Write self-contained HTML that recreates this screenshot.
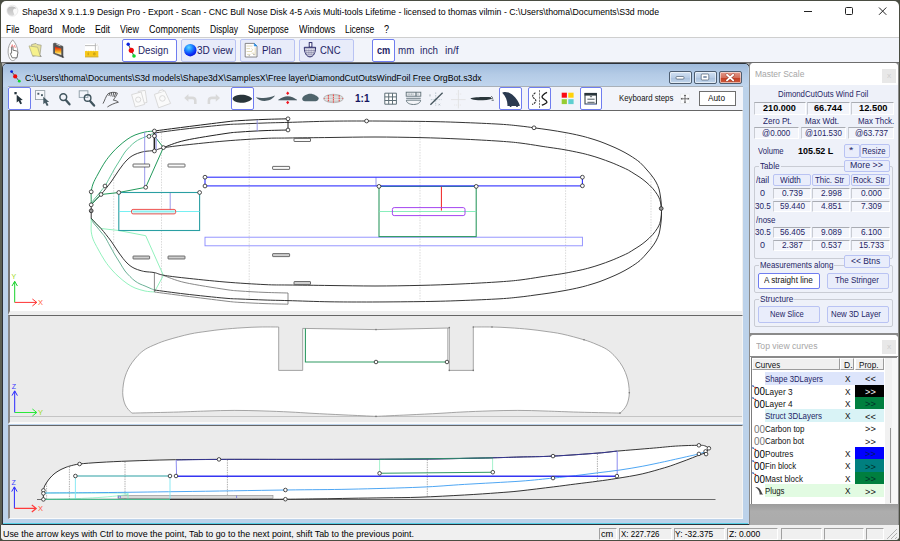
<!DOCTYPE html>
<html>
<head>
<meta charset="utf-8">
<title>Shape3d X</title>
<style>
html,body{margin:0;padding:0;}
body{width:900px;height:541px;overflow:hidden;background:#4a4d42;position:relative;font-family:"Liberation Sans",sans-serif;font-size:10px;color:#000;}
.a{position:absolute;box-sizing:border-box;}
.t{position:absolute;white-space:nowrap;line-height:1;transform-origin:0 0;display:block;}
svg{position:absolute;overflow:visible;}
#win{left:1px;top:1px;width:898px;height:539px;background:#fff;border-radius:5px 5px 4px 4px;}
#toolbar{left:1px;top:37px;width:898px;height:25px;background:#f2f4fa;border-top:1px solid #cfcfcf;}
#mdibg{left:1px;top:62px;width:898px;height:463px;background:#ababab;border-top:1px solid #6e6e6e;}
#statusbar{left:1px;top:525px;width:898px;height:15px;background:#f0f0f0;border-radius:0 0 4px 4px;}
.tb{position:absolute;box-sizing:border-box;top:39px;height:23px;border:1px solid #b9c3f3;background:#e8ecfa;border-radius:2px;}
.tb.sel{background:#fff;border:1.5px solid #6f7df0;}
/* MDI child */
#child{left:2px;top:63px;width:747.6px;height:462px;border:1px solid #2c3138;border-radius:5px 5px 0 0;background:#bcd2ea;}
#childtitle{left:3px;top:64px;width:745px;height:23px;border-radius:4px 4px 0 0;background:linear-gradient(#9fbbdc,#b4cbe6 45%,#c1d6ee);}
#childtool{left:8px;top:87px;width:735px;height:24px;background:#f2f4fa;}
.cb{position:absolute;box-sizing:border-box;top:87.4px;height:22.6px;border:1.5px solid #6f7df0;background:#fff;border-radius:2px;}
.view{position:absolute;left:8px;width:735px;box-sizing:border-box;background:#ebebeb;}
.capbtn{position:absolute;box-sizing:border-box;top:71px;height:13px;border:1px solid #4d5d70;border-radius:2px;background:linear-gradient(#d3e2f3,#b9cde6 50%,#a9c0dd 51%,#c2d6ec);box-shadow:inset 0 0 0 1px rgba(255,255,255,.55);}
/* dock panels */
#dock{left:749px;top:63px;width:150px;height:462px;background:#8a8a8a;}
.panel{position:absolute;box-sizing:border-box;left:749.8px;width:147.8px;background:#eef1f9;border-radius:4px 4px 0 0;}
.cap{position:absolute;left:0;top:0;width:147.8px;height:22px;box-sizing:border-box;background:#fff;border-radius:4px 4px 0 0;}
.capx{position:absolute;left:882px;width:14px;height:14px;background:#e8e8e8;}
.ed{position:absolute;box-sizing:border-box;border-top:1px solid #a9acb3;border-left:1px solid #c9ccd3;border-right:1px solid #fff;border-bottom:1px solid #fff;background:#f3f5fb;}
.bt{position:absolute;box-sizing:border-box;border:1px solid #b9c3f3;background:#e9edfb;border-radius:2px;}
.bt.sel{background:#fff;border:1.5px solid #6f7df0;}
.grp{position:absolute;box-sizing:border-box;border:1px solid #c9ccd4;border-radius:2px;}
.hd{position:absolute;box-sizing:border-box;top:358px;height:12px;background:#f0f0f0;border-right:1px solid #9c9c9c;border-bottom:1px solid #9c9c9c;border-top:1px solid #fff;border-left:1px solid #fff;}
.row{position:absolute;height:12.5px;}
.sb{position:absolute;box-sizing:border-box;top:528px;height:12px;border-top:1px solid #a0a0a0;border-left:1px solid #a0a0a0;border-right:1px solid #fff;border-bottom:1px solid #fff;}

</style>
</head>
<body>
<div class="a" id="win"></div>
<div class="a" id="toolbar"></div>
<div class="a" id="mdibg"></div>
<div class="a" id="statusbar"></div>
<div class="a" style="left:0;top:63px;width:2.4px;height:462px;background:#5c5f52;"></div>
<span class="t" style="left:21.6px;top:7.0px;font-size:9.5px;color:#000;transform:scaleX(0.921);">Shape3d X 9.1.1.9 Design Pro - Export - Scan - CNC Bull Nose Disk 4-5 Axis Multi-tools Lifetime - licensed to thomas vilmin - C:\Users\thoma\Documents\S3d mode</span>
<span class="t" style="left:5.6px;top:24.5px;font-size:10px;color:#000;transform:scaleX(0.840);">File</span>
<span class="t" style="left:29.1px;top:24.5px;font-size:10px;color:#000;transform:scaleX(0.873);">Board</span>
<span class="t" style="left:62.1px;top:24.5px;font-size:10px;color:#000;transform:scaleX(0.931);">Mode</span>
<span class="t" style="left:95.3px;top:24.5px;font-size:10px;color:#000;transform:scaleX(0.873);">Edit</span>
<span class="t" style="left:120.3px;top:24.5px;font-size:10px;color:#000;transform:scaleX(0.874);">View</span>
<span class="t" style="left:149.1px;top:24.5px;font-size:10px;color:#000;transform:scaleX(0.896);">Components</span>
<span class="t" style="left:210.3px;top:24.5px;font-size:10px;color:#000;transform:scaleX(0.855);">Display</span>
<span class="t" style="left:248.3px;top:24.5px;font-size:10px;color:#000;transform:scaleX(0.843);">Superpose</span>
<span class="t" style="left:299.1px;top:24.5px;font-size:10px;color:#000;transform:scaleX(0.895);">Windows</span>
<span class="t" style="left:345.4px;top:24.5px;font-size:10px;color:#000;transform:scaleX(0.850);">License</span>
<span class="t" style="left:384.1px;top:24.5px;font-size:10px;color:#000;transform:scaleX(0.908);">?</span>
<svg style="left:800px;top:4px" width="96" height="16" viewBox="800 4 96 16"><g stroke="#222" stroke-width="1" fill="none"><path d="M804 11.5H812"/><rect x="845.5" y="7.5" width="7" height="7" rx="1"/><path d="M879 7.5L886.3 14.8M886.3 7.5L879 14.8"/></g></svg>
<div class="tb sel" style="left:122px;width:55px;"></div>
<div class="tb" style="left:181px;width:54.5px;"></div>
<div class="tb" style="left:240px;width:55px;"></div>
<div class="tb" style="left:298.5px;width:55.5px;"></div>
<div class="tb sel" style="left:372px;width:23px;"></div>
<span class="t" style="left:138.3px;top:45.1px;font-size:10.5px;color:#1f1f66;transform:scaleX(0.930);">Design</span>
<span class="t" style="left:197.1px;top:45.1px;font-size:10.5px;color:#1f1f66;transform:scaleX(0.958);">3D view</span>
<span class="t" style="left:261.6px;top:45.1px;font-size:10.5px;color:#1f1f66;transform:scaleX(0.933);">Plan</span>
<span class="t" style="left:320.1px;top:45.1px;font-size:10.5px;color:#1f1f66;transform:scaleX(0.905);">CNC</span>
<span class="t" style="left:377.1px;top:44.8px;font-size:10.5px;color:#1f1f66;transform:scaleX(0.876);font-weight:bold;">cm</span>
<span class="t" style="left:398.3px;top:44.8px;font-size:10.5px;color:#1f1f66;transform:scaleX(0.931);">mm</span>
<span class="t" style="left:420.4px;top:44.8px;font-size:10.5px;color:#1f1f66;transform:scaleX(0.934);">inch</span>
<span class="t" style="left:445.4px;top:44.8px;font-size:10.5px;color:#1f1f66;transform:scaleX(0.977);">in/f</span>
<div class="a" id="child"></div>
<div class="a" id="childtitle"></div>
<div class="a" id="childtool"></div>
<div class="a" style="left:8px;top:86.3px;width:735px;height:1px;background:#a9b0b8;"></div>
<span class="t" style="left:24.6px;top:73.0px;font-size:9.5px;color:#000;transform:scaleX(0.917);">C:\Users\thoma\Documents\S3d models\Shape3dX\SamplesX\Free layer\DiamondCutOutsWindFoil Free OrgBot.s3dx</span>
<div class="capbtn" style="left:668.5px;width:23px;"></div>
<div class="capbtn" style="left:693.5px;width:23px;"></div>
<div class="capbtn" style="left:718.5px;width:23.5px;background:linear-gradient(#e29a8b,#d4705c 50%,#c23c22 51%,#cf5a3c);"></div>
<svg style="left:668px;top:70px" width="76" height="16" viewBox="668 70 76 16"><rect x="676" y="76.5" width="8" height="2.6" rx="1" fill="#fff" stroke="#4d5d70" stroke-width=".7"/><rect x="701.2" y="74" width="7.6" height="6" rx="1" fill="#fff" stroke="#4d5d70" stroke-width=".7"/><rect x="703.3" y="76" width="3.4" height="2" fill="#8a9bb3"/><path d="M727 74.8L733.2 80.4M733.2 74.8L727 80.4" stroke="#7a2a1c" stroke-width="3" stroke-linecap="round" opacity=".55"/><path d="M727 74.8L733.2 80.4M733.2 74.8L727 80.4" stroke="#fff" stroke-width="1.9" stroke-linecap="round"/></svg>
<div class="cb" style="left:8.3px;width:22.5px;"></div>
<div class="cb" style="left:231.3px;width:22.5px;"></div>
<div class="cb" style="left:499px;width:23px;"></div>
<div class="cb" style="left:528px;width:23px;"></div>
<div class="cb" style="left:579.7px;width:22px;"></div>
<span class="t" style="left:354.9px;top:93.1px;font-size:10.5px;color:#151560;transform:scaleX(0.955);font-weight:bold;">1:1</span>
<span class="t" style="left:619.3px;top:93.9px;font-size:8.7px;color:#111;transform:scaleX(0.901);">Keyboard steps</span>
<div class="a" style="left:699px;top:91.3px;width:37px;height:15.2px;border:1px solid #6e6e6e;background:#fff;"></div>
<span class="t" style="left:708.4px;top:93.9px;font-size:8.7px;color:#111;transform:scaleX(0.951);">Auto</span>
<div class="view" style="top:110px;height:205px;background:#fff;border-top:1.5px solid #666;border-left:2px solid #777;border-bottom:4px solid #efefef;border-right:1px solid #efefef;"></div>
<div class="view" style="top:315px;height:109px;border-top:1.3px solid #666;border-left:2px solid #8a8a8a;border-bottom:2px solid #fafafa;border-right:1px solid #f4f4f4;"></div>
<div class="a" style="left:10px;top:416px;width:732px;height:1px;background:#c4c4c4;"></div>
<div class="view" style="top:424.6px;height:94.6px;border-top:1.3px solid #666;border-left:2px solid #8a8a8a;border-bottom:1.5px solid #fafafa;border-right:1px solid #f4f4f4;"></div>
<div class="a" style="left:3px;top:523px;width:745px;height:1px;background:#56d0e6;"></div>
<div class="a" id="dock"></div>
<div class="panel" style="top:63.3px;height:269.3px;"><div class="cap"></div></div>
<div class="panel" style="top:334.6px;height:169.2px;background:#fff;"><div class="cap" style="border-bottom:1px solid #8a8a8a;height:22.6px;"></div></div>
<div class="a" style="left:750px;top:504px;width:148px;height:21px;background:linear-gradient(#9c9c9c,#adadad 35%,#ababab);"></div>
<div class="capx" style="top:68.5px;"></div><div class="capx" style="top:339.5px;"></div>
<span class="t" style="left:886.9px;top:71.9px;font-size:7.5px;color:#cfcfcf;transform:scaleX(1.120);">x</span>
<span class="t" style="left:886.9px;top:343.4px;font-size:7.5px;color:#cfcfcf;transform:scaleX(1.120);">x</span>
<span class="t" style="left:755.3px;top:69.5px;font-size:8.5px;color:#a6a6a6;transform:scaleX(0.996);">Master Scale</span>
<span class="t" style="left:755.9px;top:341.6px;font-size:8.5px;color:#a6a6a6;transform:scaleX(1.017);">Top view curves</span>
<span class="t" style="left:777.6px;top:90.1px;font-size:8.7px;color:#1f1f66;transform:scaleX(0.899);">DimondCutOuts Wind Foil</span>
<div class="ed" style="left:753.7px;top:102px;width:52.1px;height:12.5px;"></div>
<div class="ed" style="left:807px;top:102px;width:43px;height:12.5px;"></div>
<div class="ed" style="left:851px;top:102px;width:43px;height:12.5px;"></div>
<span class="t" style="left:763.3px;top:104.1px;font-size:8.7px;color:#000;transform:scaleX(1.048);font-weight:bold;">210.000</span>
<span class="t" style="left:814.3px;top:104.1px;font-size:8.7px;color:#000;transform:scaleX(1.057);font-weight:bold;">66.744</span>
<span class="t" style="left:858.6px;top:104.1px;font-size:8.7px;color:#000;transform:scaleX(1.072);font-weight:bold;">12.500</span>
<span class="t" style="left:763.3px;top:117.1px;font-size:8.7px;color:#1f1f66;transform:scaleX(0.932);">Zero Pt.</span>
<span class="t" style="left:805.4px;top:117.1px;font-size:8.7px;color:#1f1f66;transform:scaleX(0.927);">Max Wdt.</span>
<span class="t" style="left:857.9px;top:117.1px;font-size:8.7px;color:#1f1f66;transform:scaleX(0.907);">Max Thck.</span>
<div class="ed" style="left:753.7px;top:127.3px;width:45.3px;height:12.2px;"></div>
<div class="ed" style="left:800.8px;top:127.3px;width:45.5px;height:12.2px;"></div>
<div class="ed" style="left:848.3px;top:127.3px;width:45.7px;height:12.2px;"></div>
<span class="t" style="left:762.1px;top:129.1px;font-size:8.7px;color:#1f1f66;transform:scaleX(0.926);">@0.000</span>
<span class="t" style="left:804.9px;top:129.1px;font-size:8.7px;color:#1f1f66;transform:scaleX(0.915);">@101.530</span>
<span class="t" style="left:854.9px;top:129.1px;font-size:8.7px;color:#1f1f66;transform:scaleX(0.932);">@63.737</span>
<span class="t" style="left:757.9px;top:147.4px;font-size:8.7px;color:#1f1f66;transform:scaleX(0.880);">Volume</span>
<span class="t" style="left:797.6px;top:147.4px;font-size:8.7px;color:#000;transform:scaleX(1.029);font-weight:bold;">105.52 L</span>
<div class="bt" style="left:844px;top:144.3px;width:15.5px;height:14px;"></div>
<div class="bt" style="left:859.5px;top:144.3px;width:30.5px;height:14px;"></div>
<span class="t" style="left:849.1px;top:146.1px;font-size:8.7px;color:#1f1f66;transform:scaleX(1.268);">*</span>
<span class="t" style="left:861.6px;top:147.4px;font-size:8.7px;color:#1f1f66;transform:scaleX(0.885);">Resize</span>
<div class="grp" style="left:754.3px;top:166.3px;width:138.7px;height:92.7px;"></div>
<div class="a" style="left:758.5px;top:164px;width:22px;height:5px;background:#eef1f9;"></div>
<span class="t" style="left:759.6px;top:162.4px;font-size:8.7px;color:#1f1f66;transform:scaleX(0.938);">Table</span>
<div class="bt" style="left:844px;top:159.8px;width:46px;height:12.4px;"></div>
<span class="t" style="left:849.6px;top:161.1px;font-size:8.7px;color:#1f1f66;transform:scaleX(1.014);">More &gt;&gt;</span>
<div class="bt" style="left:772.5px;top:174px;width:38px;height:12px;"></div>
<div class="bt" style="left:812px;top:174px;width:38px;height:12px;"></div>
<div class="bt" style="left:851px;top:174px;width:39px;height:12px;"></div>
<span class="t" style="left:756.3px;top:175.6px;font-size:8.7px;color:#1f1f66;transform:scaleX(0.968);">/tail</span>
<span class="t" style="left:779.6px;top:175.6px;font-size:8.7px;color:#1f1f66;transform:scaleX(0.936);">Width</span>
<span class="t" style="left:814.9px;top:175.6px;font-size:8.7px;color:#1f1f66;transform:scaleX(0.903);">Thic. Str</span>
<span class="t" style="left:852.9px;top:175.6px;font-size:8.7px;color:#1f1f66;transform:scaleX(0.901);">Rock. Str</span>
<span class="t" style="left:760.4px;top:188.9px;font-size:8.7px;color:#1f1f66;transform:scaleX(1.032);">0</span>
<div class="ed" style="left:772.5px;top:187.5px;width:38px;height:11.3px;"></div>
<span class="t" style="left:781.6px;top:188.9px;font-size:8.7px;color:#1f1f66;transform:scaleX(0.956);">0.739</span>
<div class="ed" style="left:812px;top:187.5px;width:38px;height:11.3px;"></div>
<span class="t" style="left:821.1px;top:188.9px;font-size:8.7px;color:#1f1f66;transform:scaleX(0.956);">2.998</span>
<div class="ed" style="left:851px;top:187.5px;width:39px;height:11.3px;"></div>
<span class="t" style="left:860.6px;top:188.9px;font-size:8.7px;color:#1f1f66;transform:scaleX(0.956);">0.000</span>
<span class="t" style="left:755.4px;top:201.9px;font-size:8.7px;color:#1f1f66;transform:scaleX(0.934);">30.5</span>
<div class="ed" style="left:772.5px;top:200.5px;width:38px;height:11.3px;"></div>
<span class="t" style="left:779.5px;top:201.9px;font-size:8.7px;color:#1f1f66;transform:scaleX(0.941);">59.440</span>
<div class="ed" style="left:812px;top:200.5px;width:38px;height:11.3px;"></div>
<span class="t" style="left:821.1px;top:201.9px;font-size:8.7px;color:#1f1f66;transform:scaleX(0.956);">4.851</span>
<div class="ed" style="left:851px;top:200.5px;width:39px;height:11.3px;"></div>
<span class="t" style="left:860.6px;top:201.9px;font-size:8.7px;color:#1f1f66;transform:scaleX(0.956);">7.309</span>
<span class="t" style="left:755.4px;top:228.1px;font-size:8.7px;color:#1f1f66;transform:scaleX(0.934);">30.5</span>
<div class="ed" style="left:772.5px;top:226.7px;width:38px;height:11.3px;"></div>
<span class="t" style="left:779.5px;top:228.1px;font-size:8.7px;color:#1f1f66;transform:scaleX(0.941);">56.405</span>
<div class="ed" style="left:812px;top:226.7px;width:38px;height:11.3px;"></div>
<span class="t" style="left:821.1px;top:228.1px;font-size:8.7px;color:#1f1f66;transform:scaleX(0.956);">9.089</span>
<div class="ed" style="left:851px;top:226.7px;width:39px;height:11.3px;"></div>
<span class="t" style="left:860.6px;top:228.1px;font-size:8.7px;color:#1f1f66;transform:scaleX(0.956);">6.100</span>
<span class="t" style="left:760.4px;top:241.4px;font-size:8.7px;color:#1f1f66;transform:scaleX(1.032);">0</span>
<div class="ed" style="left:772.5px;top:239.7px;width:38px;height:11.3px;"></div>
<span class="t" style="left:781.6px;top:241.4px;font-size:8.7px;color:#1f1f66;transform:scaleX(0.956);">2.387</span>
<div class="ed" style="left:812px;top:239.7px;width:38px;height:11.3px;"></div>
<span class="t" style="left:821.1px;top:241.4px;font-size:8.7px;color:#1f1f66;transform:scaleX(0.956);">0.537</span>
<div class="ed" style="left:851px;top:239.7px;width:39px;height:11.3px;"></div>
<span class="t" style="left:858.5px;top:241.4px;font-size:8.7px;color:#1f1f66;transform:scaleX(0.941);">15.733</span>
<span class="t" style="left:755.9px;top:215.6px;font-size:8.7px;color:#1f1f66;transform:scaleX(0.917);">/nose</span>
<div class="grp" style="left:754.3px;top:265px;width:138.7px;height:28px;"></div>
<div class="a" style="left:758.5px;top:263px;width:75.5px;height:5px;background:#eef1f9;"></div>
<span class="t" style="left:759.6px;top:260.9px;font-size:8.7px;color:#1f1f66;transform:scaleX(0.903);">Measurements along</span>
<div class="bt" style="left:844px;top:255.3px;width:46px;height:12.4px;"></div>
<span class="t" style="left:851.3px;top:256.8px;font-size:8.7px;color:#1f1f66;transform:scaleX(0.972);">&lt;&lt; Btns</span>
<div class="bt sel" style="left:758.3px;top:272.5px;width:61.5px;height:16.3px;"></div>
<div class="bt" style="left:827px;top:272.5px;width:62px;height:16.3px;"></div>
<span class="t" style="left:763.6px;top:275.6px;font-size:8.7px;color:#111;transform:scaleX(0.936);">A straight line</span>
<span class="t" style="left:834.6px;top:275.6px;font-size:8.7px;color:#1f1f66;transform:scaleX(0.916);">The Stringer</span>
<div class="grp" style="left:754.3px;top:298.5px;width:138.7px;height:28px;"></div>
<div class="a" style="left:758.5px;top:296px;width:35.5px;height:5px;background:#eef1f9;"></div>
<span class="t" style="left:759.6px;top:294.8px;font-size:8.7px;color:#1f1f66;transform:scaleX(0.945);">Structure</span>
<div class="bt" style="left:758.3px;top:306.3px;width:61.5px;height:16.3px;"></div>
<div class="bt" style="left:827px;top:306.3px;width:62px;height:16.3px;"></div>
<span class="t" style="left:770.4px;top:309.8px;font-size:8.7px;color:#1f1f66;transform:scaleX(0.872);">New Slice</span>
<span class="t" style="left:831.3px;top:309.8px;font-size:8.7px;color:#1f1f66;transform:scaleX(0.907);">New 3D Layer</span>
<div class="a" style="left:751px;top:357px;width:146px;height:147px;border-top:1px solid #8a8a8a;border-left:1px solid #7c7c7c;background:#fff;"></div>
<div class="a" style="left:885px;top:358px;width:12.6px;height:145.6px;background:#f1f1f1;border-right:6px solid #f7f7f7;"></div>
<div class="a" style="left:890.2px;top:428px;width:1.3px;height:74.5px;background:#969696;"></div>
<div class="hd" style="left:752px;width:88px;"></div><div class="hd" style="left:840.3px;width:14px;"></div><div class="hd" style="left:854.6px;width:29.4px;"></div>
<span class="t" style="left:755.4px;top:360.6px;font-size:8.7px;color:#111;transform:scaleX(0.919);">Curves</span>
<span class="t" style="left:843.6px;top:360.6px;font-size:8.7px;color:#111;transform:scaleX(0.978);">D.</span>
<span class="t" style="left:859.3px;top:360.6px;font-size:8.7px;color:#111;transform:scaleX(0.934);">Prop.</span>
<div class="row" style="left:765px;top:372.0px;width:119.3px;background:#dde5fb;"></div>
<span class="t" style="left:765.4px;top:375.0px;font-size:8.7px;color:#1f1f66;transform:scaleX(0.896);">Shape 3DLayers</span>
<span class="t" style="left:844.6px;top:375.0px;font-size:8.7px;color:#111;transform:scaleX(0.949);">X</span>
<span class="t" style="left:864.6px;top:375.4px;font-size:8.7px;color:#111;transform:scaleX(1.063);">&lt;&lt;</span>
<div class="row" style="left:855px;top:384.5px;width:29.3px;background:#000;"></div>
<span class="t" style="left:765.4px;top:387.5px;font-size:8.7px;color:#111;transform:scaleX(0.949);">Layer 3</span>
<span class="t" style="left:844.6px;top:387.5px;font-size:8.7px;color:#111;transform:scaleX(0.949);">X</span>
<span class="t" style="left:864.6px;top:387.9px;font-size:8.7px;color:#fff;transform:scaleX(1.063);">&gt;&gt;</span>
<span class="t" style="left:753.8px;top:386.3px;font-size:10.5px;color:#000;transform:scaleX(0.941);">00</span>
<svg style="left:752px;top:384.7px" width="6" height="5" viewBox="0 0 6 5"><path d="M.5 .7L4.5 3.6" stroke="#2aa36b" stroke-width=".8"/><circle cx="3.4" cy="2.6" r=".9" fill="#d22"/><circle cx="1" cy="1" r=".7" fill="#22c"/></svg>
<div class="row" style="left:855px;top:396.9px;width:29.3px;background:#007f3f;"></div>
<span class="t" style="left:765.4px;top:400.0px;font-size:8.7px;color:#111;transform:scaleX(0.949);">Layer 4</span>
<span class="t" style="left:844.6px;top:400.0px;font-size:8.7px;color:#111;transform:scaleX(0.949);">X</span>
<span class="t" style="left:864.6px;top:400.4px;font-size:8.7px;color:#00302a;transform:scaleX(1.063);">&gt;&gt;</span>
<span class="t" style="left:753.8px;top:398.8px;font-size:10.5px;color:#000;transform:scaleX(0.941);">00</span>
<svg style="left:752px;top:397.1px" width="6" height="5" viewBox="0 0 6 5"><path d="M.5 .7L4.5 3.6" stroke="#2aa36b" stroke-width=".8"/><circle cx="3.4" cy="2.6" r=".9" fill="#d22"/><circle cx="1" cy="1" r=".7" fill="#22c"/></svg>
<div class="row" style="left:765px;top:409.4px;width:119.3px;background:#d9f3f6;"></div>
<span class="t" style="left:765.4px;top:412.4px;font-size:8.7px;color:#1f1f66;transform:scaleX(0.915);">Struct 3DLayers</span>
<span class="t" style="left:844.6px;top:412.4px;font-size:8.7px;color:#111;transform:scaleX(0.949);">X</span>
<span class="t" style="left:864.6px;top:412.8px;font-size:8.7px;color:#111;transform:scaleX(1.063);">&lt;&lt;</span>
<span class="t" style="left:765.4px;top:424.9px;font-size:8.7px;color:#111;transform:scaleX(0.919);">Carbon top</span>
<span class="t" style="left:864.6px;top:425.3px;font-size:8.7px;color:#111;transform:scaleX(1.063);">&gt;&gt;</span>
<span class="t" style="left:753.8px;top:423.7px;font-size:10.5px;color:#777;transform:scaleX(0.941);">00</span>
<span class="t" style="left:765.4px;top:437.4px;font-size:8.7px;color:#111;transform:scaleX(0.907);">Carbon bot</span>
<span class="t" style="left:864.6px;top:437.8px;font-size:8.7px;color:#111;transform:scaleX(1.063);">&gt;&gt;</span>
<span class="t" style="left:753.8px;top:436.2px;font-size:10.5px;color:#777;transform:scaleX(0.941);">00</span>
<div class="row" style="left:855px;top:446.8px;width:29.3px;background:#0000ff;"></div>
<span class="t" style="left:765.4px;top:449.9px;font-size:8.7px;color:#111;transform:scaleX(0.945);">Poutres</span>
<span class="t" style="left:844.6px;top:449.9px;font-size:8.7px;color:#111;transform:scaleX(0.949);">X</span>
<span class="t" style="left:864.6px;top:450.3px;font-size:8.7px;color:#001a60;transform:scaleX(1.063);">&gt;&gt;</span>
<span class="t" style="left:753.8px;top:448.6px;font-size:10.5px;color:#000;transform:scaleX(0.941);">00</span>
<svg style="left:752px;top:447.0px" width="6" height="5" viewBox="0 0 6 5"><path d="M.5 .7L4.5 3.6" stroke="#2aa36b" stroke-width=".8"/><circle cx="3.4" cy="2.6" r=".9" fill="#d22"/><circle cx="1" cy="1" r=".7" fill="#22c"/></svg>
<div class="row" style="left:855px;top:459.3px;width:29.3px;background:#007f7f;"></div>
<span class="t" style="left:765.4px;top:462.3px;font-size:8.7px;color:#111;transform:scaleX(0.892);">Fin block</span>
<span class="t" style="left:844.6px;top:462.3px;font-size:8.7px;color:#111;transform:scaleX(0.949);">X</span>
<span class="t" style="left:864.6px;top:462.7px;font-size:8.7px;color:#00302a;transform:scaleX(1.063);">&gt;&gt;</span>
<span class="t" style="left:753.8px;top:461.1px;font-size:10.5px;color:#000;transform:scaleX(0.941);">00</span>
<svg style="left:752px;top:459.5px" width="6" height="5" viewBox="0 0 6 5"><path d="M.5 .7L4.5 3.6" stroke="#2aa36b" stroke-width=".8"/><circle cx="3.4" cy="2.6" r=".9" fill="#d22"/><circle cx="1" cy="1" r=".7" fill="#22c"/></svg>
<div class="row" style="left:855px;top:471.8px;width:29.3px;background:#007f3f;"></div>
<span class="t" style="left:765.4px;top:474.8px;font-size:8.7px;color:#111;transform:scaleX(0.915);">Mast block</span>
<span class="t" style="left:844.6px;top:474.8px;font-size:8.7px;color:#111;transform:scaleX(0.949);">X</span>
<span class="t" style="left:864.6px;top:475.2px;font-size:8.7px;color:#00302a;transform:scaleX(1.063);">&gt;&gt;</span>
<span class="t" style="left:753.8px;top:473.6px;font-size:10.5px;color:#000;transform:scaleX(0.941);">00</span>
<svg style="left:752px;top:472.0px" width="6" height="5" viewBox="0 0 6 5"><path d="M.5 .7L4.5 3.6" stroke="#2aa36b" stroke-width=".8"/><circle cx="3.4" cy="2.6" r=".9" fill="#d22"/><circle cx="1" cy="1" r=".7" fill="#22c"/></svg>
<div class="row" style="left:765px;top:484.2px;width:119.3px;background:#e2fbe2;"></div>
<span class="t" style="left:765.4px;top:487.3px;font-size:8.7px;color:#111;transform:scaleX(0.897);">Plugs</span>
<span class="t" style="left:844.6px;top:487.3px;font-size:8.7px;color:#111;transform:scaleX(0.949);">X</span>
<span class="t" style="left:864.6px;top:487.7px;font-size:8.7px;color:#111;transform:scaleX(1.063);">&gt;&gt;</span>
<svg style="left:755px;top:485.7px" width="9" height="9" viewBox="0 0 9 9"><path d="M.3 1.2C3 .6 5.2 2.6 7.2 7.6L8.3 8.5H4.6C5 6 3.2 2.6 .3 1.2Z" fill="#444"/></svg>
<span class="t" style="left:2.6px;top:529.7px;font-size:9px;color:#000;transform:scaleX(0.987);">Use the arrow keys with Ctrl to move the point, Tab to go to the next point, shift Tab to the previous point.</span>
<div class="sb" style="left:599.2px;width:18.3px;"></div>
<div class="sb" style="left:619.3px;width:52.7px;"></div>
<div class="sb" style="left:673.5px;width:51.5px;"></div>
<div class="sb" style="left:726.9px;width:51.5px;"></div>
<div class="sb" style="left:781px;width:40.8px;"></div>
<div class="sb" style="left:823.6px;width:40.8px;"></div>
<div class="sb" style="left:866.2px;width:17.8px;"></div>
<span class="t" style="left:601.2px;top:529.7px;font-size:9px;color:#000;transform:scaleX(1.017);">cm</span>
<span class="t" style="left:621.2px;top:529.7px;font-size:9px;color:#000;transform:scaleX(0.884);">X: 227.726</span>
<span class="t" style="left:674.9px;top:529.7px;font-size:9px;color:#000;transform:scaleX(0.931);">Y: -32.375</span>
<span class="t" style="left:728.6px;top:529.7px;font-size:9px;color:#000;transform:scaleX(0.948);">Z: 0.000</span>
<svg style="left:885px;top:528px" width="13" height="12" viewBox="0 0 13 12"><g stroke="#b0b0b0" stroke-width="1"><path d="M12 1L2 11M12 5L6 11M12 9L10 11"/></g></svg>
<svg style="left:10px;top:112px" width="733" height="200" viewBox="10 112 733 200" fill="none">
<path d="M113.7 171.3V251.7" stroke="#cacaca" stroke-width=".7" stroke-dasharray="1.5 1.2"/>
<path d="M161.5 133.1V289.9" stroke="#cacaca" stroke-width=".7" stroke-dasharray="1.5 1.2"/>
<path d="M249.2 124.6V298.4" stroke="#cacaca" stroke-width=".7" stroke-dasharray="1.5 1.2"/>
<path d="M420.0 122.4V300.6" stroke="#cacaca" stroke-width=".7" stroke-dasharray="1.5 1.2"/>
<path d="M565.6 133.6V289.4" stroke="#cacaca" stroke-width=".7" stroke-dasharray="1.5 1.2"/>
<path d="M651.0 175.8V247.2" stroke="#cacaca" stroke-width=".7" stroke-dasharray="1.5 1.2"/>
<path d="M91.2 218.2C91.2 219.3 91.2 222.8 91.2 225.0C91.2 227.2 90.9 228.9 91.2 231.2C91.5 233.5 91.9 236.0 93.0 239.0C94.1 242.0 96.0 245.3 98.0 249.0C100.0 252.7 102.7 257.5 105.0 261.0C107.3 264.5 109.7 267.3 112.0 270.0C114.3 272.7 116.5 274.8 119.0 277.0C121.5 279.2 124.3 281.7 127.0 283.5C129.7 285.3 132.0 286.8 135.0 288.0C138.0 289.2 141.8 290.3 145.0 291.0C148.2 291.7 152.8 291.8 154.4 292.0" stroke="#86efb6" stroke-width=".9"/>
<path d="M91.2 218.2L101.0 228.5L118.8 230.5L145.7 235.7L163.4 275.4L154.4 292.0" stroke="#86efb6" stroke-width=".9"/>
<path d="M91.2 218.2C91.6 219.0 92.5 221.5 93.5 223.0C94.5 224.5 95.8 225.5 97.0 227.0C98.2 228.5 99.7 230.3 101.0 232.0C102.3 233.7 103.5 234.7 105.0 237.0C106.5 239.3 108.3 243.0 110.0 246.0C111.7 249.0 113.3 252.2 115.0 255.0C116.7 257.8 118.3 260.3 120.0 263.0C121.7 265.7 123.3 268.8 125.0 271.0C126.7 273.2 128.3 274.8 130.0 276.5C131.7 278.2 133.3 279.8 135.0 281.0C136.7 282.2 138.3 283.2 140.0 284.0C141.7 284.8 143.3 285.3 145.0 286.0C146.7 286.7 148.4 287.5 150.0 288.2C151.6 288.9 153.7 289.7 154.4 290.0" stroke="#5aa78a" stroke-width=".9"/>
<path d="M154.4 292.0C159.5 292.7 173.2 294.5 185.0 296.0C196.8 297.5 215.8 299.9 225.0 301.0C234.2 302.1 233.3 302.0 240.0 302.4C246.7 302.8 257.0 303.3 265.0 303.6C273.0 303.9 284.2 304.1 288.0 304.2L288 293.0" stroke="#7a7a7a" stroke-width=".9"/>
<path d="M163.4 275.4C167.0 276.6 174.7 280.3 185.0 282.6C195.3 284.9 215.8 288.0 225.0 289.4C234.2 290.8 233.3 290.5 240.0 291.0C246.7 291.5 257.0 292.1 265.0 292.4C273.0 292.7 284.2 292.9 288.0 293.0" stroke="#7a7a7a" stroke-width=".9"/>
<path d="M154.4 272.6V292.0" stroke="#7a7a7a" stroke-width=".9"/>
<rect x="205" y="237.2" width="377.4" height="8.6" stroke="#8a8aff" stroke-width=".9"/>
<path d="M154.4 133.0C159.5 132.3 173.2 130.4 185.0 129.0C196.8 127.6 215.8 125.6 225.0 124.8C234.2 124.0 233.3 124.3 240.0 124.0C246.7 123.7 257.0 123.3 265.0 123.0C273.0 122.7 277.2 122.7 288.0 122.4C298.8 122.1 316.9 121.4 330.0 121.2C343.1 121.0 351.6 121.0 366.6 121.0C381.6 121.0 404.4 121.2 420.0 121.4C435.6 121.6 446.7 121.9 460.0 122.4C473.3 122.9 490.0 123.6 500.0 124.2C510.0 124.8 514.3 125.4 520.0 126.0C525.7 126.6 529.0 127.1 534.0 127.8C539.0 128.5 544.8 129.2 550.0 130.0C555.2 130.8 560.0 131.6 565.0 132.5C570.0 133.4 575.8 134.6 580.0 135.6C584.2 136.6 586.7 137.3 590.0 138.3C593.3 139.3 596.7 140.3 600.0 141.5C603.3 142.7 606.7 144.1 610.0 145.5C613.3 146.9 616.7 148.3 620.0 150.0C623.3 151.7 626.7 153.4 630.0 155.5C633.3 157.6 637.2 160.1 640.0 162.5C642.8 164.9 645.0 167.8 647.0 170.0C649.0 172.2 650.5 174.0 652.0 176.0C653.5 178.0 654.8 179.8 656.0 182.0C657.2 184.2 658.2 186.5 659.0 189.0C659.8 191.5 660.1 194.7 660.5 197.0C660.9 199.3 661.0 200.6 661.2 203.0C661.4 205.4 661.5 208.7 661.5 211.5C661.5 214.3 661.4 217.6 661.2 220.0C661.0 222.4 660.9 223.7 660.5 226.0C660.1 228.3 659.8 231.5 659.0 234.0C658.2 236.5 657.2 238.8 656.0 241.0C654.8 243.2 653.5 245.0 652.0 247.0C650.5 249.0 649.0 250.8 647.0 253.0C645.0 255.2 642.8 258.1 640.0 260.5C637.2 262.9 633.3 265.4 630.0 267.5C626.7 269.6 623.3 271.3 620.0 273.0C616.7 274.7 613.3 276.1 610.0 277.5C606.7 278.9 603.3 280.3 600.0 281.5C596.7 282.7 593.3 283.7 590.0 284.7C586.7 285.7 584.2 286.4 580.0 287.4C575.8 288.4 570.0 289.6 565.0 290.5C560.0 291.4 555.2 292.2 550.0 293.0C544.8 293.8 539.0 294.5 534.0 295.2C529.0 295.9 525.7 296.4 520.0 297.0C514.3 297.6 510.0 298.2 500.0 298.8C490.0 299.4 473.3 300.1 460.0 300.6C446.7 301.1 435.6 301.4 420.0 301.6C404.4 301.8 381.6 302.0 366.6 302.0C351.6 302.0 343.1 302.0 330.0 301.8C316.9 301.6 298.8 300.9 288.0 300.6C277.2 300.3 273.0 300.3 265.0 300.0C257.0 299.7 246.7 299.3 240.0 299.0C233.3 298.7 234.2 299.0 225.0 298.2C215.8 297.4 196.8 295.4 185.0 294.0C173.2 292.6 159.5 290.7 154.4 290.0" stroke="#2a2a2a" stroke-width=".95"/>
<path d="M91.2 204.8C92.0 203.9 94.4 201.2 96.0 199.5C97.6 197.8 99.3 196.3 101.0 194.5C102.7 192.7 104.3 190.5 106.0 188.4C107.7 186.3 109.5 184.1 111.0 182.0C112.5 179.9 113.7 178.0 115.0 176.0C116.3 174.0 117.7 171.9 119.0 170.0C120.3 168.1 121.7 166.3 123.0 164.6C124.3 162.9 125.7 161.3 127.0 160.0C128.3 158.7 129.7 157.5 131.0 156.6C132.3 155.7 133.5 155.1 135.0 154.4C136.5 153.7 138.3 153.1 140.0 152.6C141.7 152.1 142.6 151.8 145.0 151.4C147.4 151.0 151.3 151.0 154.4 150.4C157.5 149.8 158.3 148.7 163.4 147.8C168.5 146.9 174.7 146.1 185.0 145.0C195.3 143.9 211.7 142.1 225.0 141.0C238.3 139.9 254.5 138.9 265.0 138.4C275.5 137.9 277.2 138.2 288.0 138.0C298.8 137.8 315.5 137.7 330.0 137.5C344.5 137.3 360.0 137.0 375.0 137.0C390.0 137.0 405.8 137.3 420.0 137.6C434.2 137.9 446.7 138.4 460.0 139.0C473.3 139.6 490.0 140.5 500.0 141.2C510.0 141.9 513.3 142.2 520.0 143.0C526.7 143.8 535.0 145.2 540.0 146.0C545.0 146.8 545.8 146.9 550.0 147.5C554.2 148.1 560.0 148.9 565.0 149.8C570.0 150.7 575.8 151.9 580.0 152.8C584.2 153.7 586.7 154.4 590.0 155.3C593.3 156.2 596.5 157.2 600.0 158.4C603.5 159.6 607.3 161.0 611.0 162.4C614.7 163.8 619.1 165.8 622.0 167.1C624.9 168.4 626.5 169.1 628.5 170.2C630.5 171.3 632.1 172.4 634.0 173.6C635.9 174.8 638.0 176.0 640.0 177.4C642.0 178.8 643.9 180.2 646.0 182.0C648.1 183.8 650.6 186.1 652.5 188.2C654.4 190.3 656.1 192.7 657.3 194.6C658.5 196.5 659.1 197.7 659.7 199.4C660.3 201.1 660.7 203.0 661.0 205.0C661.3 207.0 661.5 209.3 661.5 211.5C661.5 213.7 661.3 216.0 661.0 218.0C660.7 220.0 660.3 221.9 659.7 223.6C659.1 225.3 658.5 226.5 657.3 228.4C656.1 230.3 654.4 232.7 652.5 234.8C650.6 236.9 648.1 239.2 646.0 241.0C643.9 242.8 642.0 244.2 640.0 245.6C638.0 247.0 635.9 248.2 634.0 249.4C632.1 250.6 630.5 251.7 628.5 252.8C626.5 253.9 624.9 254.6 622.0 255.9C619.1 257.2 614.7 259.2 611.0 260.6C607.3 262.1 603.5 263.4 600.0 264.6C596.5 265.8 593.3 266.8 590.0 267.7C586.7 268.6 584.2 269.3 580.0 270.2C575.8 271.1 570.0 272.3 565.0 273.2C560.0 274.1 554.2 274.9 550.0 275.5C545.8 276.1 545.0 276.2 540.0 277.0C535.0 277.8 526.7 279.2 520.0 280.0C513.3 280.8 510.0 281.1 500.0 281.8C490.0 282.5 473.3 283.4 460.0 284.0C446.7 284.6 434.2 285.1 420.0 285.4C405.8 285.7 390.0 286.0 375.0 286.0C360.0 286.0 344.5 285.7 330.0 285.5C315.5 285.3 298.8 285.1 288.0 285.0C277.2 284.9 275.5 285.1 265.0 284.6C254.5 284.1 238.3 283.1 225.0 282.0C211.7 280.9 195.3 279.1 185.0 278.0C174.7 276.9 168.5 276.1 163.4 275.2C158.3 274.3 157.5 273.2 154.4 272.6C151.3 272.0 147.4 272.0 145.0 271.6C142.6 271.2 141.7 270.9 140.0 270.4C138.3 269.9 136.5 269.3 135.0 268.6C133.5 267.9 132.3 267.3 131.0 266.4C129.7 265.5 128.3 264.3 127.0 263.0C125.7 261.7 124.3 260.1 123.0 258.4C121.7 256.7 120.3 254.9 119.0 253.0C117.7 251.1 116.3 249.0 115.0 247.0C113.7 245.0 112.5 243.1 111.0 241.0C109.5 238.9 107.7 236.7 106.0 234.6C104.3 232.5 102.7 230.3 101.0 228.5C99.3 226.7 97.6 225.2 96.0 223.5C94.4 221.8 92.0 219.1 91.2 218.2" stroke="#2a2a2a" stroke-width=".95"/>
<path d="M91.2 204.8C91.6 204.0 92.5 201.5 93.5 200.0C94.5 198.5 95.8 197.5 97.0 196.0C98.2 194.5 99.7 192.7 101.0 191.0C102.3 189.3 103.5 188.3 105.0 186.0C106.5 183.7 108.3 180.0 110.0 177.0C111.7 174.0 113.3 170.8 115.0 168.0C116.7 165.2 118.3 162.7 120.0 160.0C121.7 157.3 123.3 154.2 125.0 152.0C126.7 149.8 128.3 148.2 130.0 146.5C131.7 144.8 133.3 143.2 135.0 142.0C136.7 140.8 138.3 139.8 140.0 139.0C141.7 138.2 143.3 137.7 145.0 137.0C146.7 136.3 148.4 135.5 150.0 134.8C151.6 134.1 153.7 133.3 154.4 133.0" stroke="#5cc094" stroke-width=".95"/>
<path d="M91.2 204.8C91.2 203.7 91.2 200.2 91.2 198.0C91.2 195.8 90.9 194.1 91.2 191.8C91.5 189.5 91.9 187.0 93.0 184.0C94.1 181.0 96.0 177.7 98.0 174.0C100.0 170.3 102.7 165.5 105.0 162.0C107.3 158.5 109.7 155.7 112.0 153.0C114.3 150.3 116.5 148.2 119.0 146.0C121.5 143.8 124.3 141.3 127.0 139.5C129.7 137.7 132.0 136.2 135.0 135.0C138.0 133.8 141.8 132.7 145.0 132.0C148.2 131.3 152.8 131.2 154.4 131.0" stroke="#239a5c" stroke-width="1"/>
<path d="M91.2 204.8L101.0 194.5L118.8 192.5L145.7 187.3L163.4 147.6L154.4 136.0" stroke="#239a5c" stroke-width="1"/>
<path d="M154.4 131.0C159.5 130.3 173.2 128.5 185.0 127.0C196.8 125.5 215.8 123.1 225.0 122.0C234.2 120.9 233.3 121.0 240.0 120.6C246.7 120.2 257.0 119.7 265.0 119.4C273.0 119.1 284.2 118.9 288.0 118.8V130" stroke="#222" stroke-width="1"/>
<path d="M163.4 147.6C167.0 146.4 174.7 142.7 185.0 140.4C195.3 138.1 215.8 135.0 225.0 133.6C234.2 132.2 233.3 132.5 240.0 132.0C246.7 131.5 257.0 130.9 265.0 130.6C273.0 130.3 284.2 130.1 288.0 130.0" stroke="#222" stroke-width="1"/>
<path d="M154.4 131V151" stroke="#222" stroke-width="1.6"/>
<path d="M91.2 204.8V218.2" stroke="#2a2a2a" stroke-width=".95"/>
<path d="M144.7 132.2V187.3M156.2 133V150M257.2 120V131.2M170.2 193V211M376 177.4V185.6" stroke="#8c8ce8" stroke-width=".9"/>
<rect x="118.8" y="192.5" width="80.8" height="38" stroke="#2a9fa3" stroke-width="1.1"/>
<path d="M118.8 211.5H199.6" stroke="#66eef2" stroke-width=".9"/>
<rect x="131.5" y="209.4" width="44.2" height="4.5" rx="1.6" fill="#c9f6f6" stroke="#f0403c" stroke-width=".9"/>
<path d="M133 211.5H174.5" stroke="#8af0f0" stroke-width="1"/>
<rect x="379" y="186.4" width="97.2" height="50.2" stroke="#2f9a62" stroke-width="1.1"/>
<path d="M379 211.5H476.2" stroke="#7aecb4" stroke-width=".9"/>
<path d="M441.4 186.6V210.6" stroke="#f02020" stroke-width="1"/>
<rect x="392.4" y="207.6" width="72.6" height="8" rx="1.8" stroke="#a445f0" stroke-width="1"/>
<rect x="205" y="177.2" width="377.4" height="8.7" stroke="#2f2fff" stroke-width="1.1"/>
<rect x="133.0" y="164.0" width="16.6" height="3.0" rx=".5" fill="#fafafa" stroke="#2e2e2e" stroke-width=".7"/>
<rect x="133.0" y="256.0" width="16.6" height="3.0" rx=".5" fill="#cfcfcf" stroke="#3a3a3a" stroke-width=".7"/>
<rect x="168.0" y="164.0" width="17.0" height="3.0" rx=".5" fill="#fafafa" stroke="#2e2e2e" stroke-width=".7"/>
<rect x="168.0" y="256.0" width="17.0" height="3.0" rx=".5" fill="#cfcfcf" stroke="#3a3a3a" stroke-width=".7"/>
<rect x="272.6" y="166.4" width="17.0" height="3.0" rx=".5" fill="#fafafa" stroke="#2e2e2e" stroke-width=".7"/>
<rect x="272.6" y="253.6" width="17.0" height="3.0" rx=".5" fill="#cfcfcf" stroke="#3a3a3a" stroke-width=".7"/>
<rect x="294.0" y="138.4" width="16.5" height="3.1" rx=".5" fill="#fafafa" stroke="#2e2e2e" stroke-width=".7"/>
<rect x="294.0" y="281.5" width="16.5" height="3.1" rx=".5" fill="#cfcfcf" stroke="#3a3a3a" stroke-width=".7"/>
<circle cx="154.4" cy="131.0" r="1.9" fill="#fff" stroke="#222" stroke-width=".8"/>
<circle cx="149.0" cy="136.4" r="1.9" fill="#fff" stroke="#222" stroke-width=".8"/>
<circle cx="154.4" cy="136.0" r="1.9" fill="#fff" stroke="#222" stroke-width=".8"/>
<circle cx="154.4" cy="151.0" r="1.9" fill="#fff" stroke="#222" stroke-width=".8"/>
<circle cx="163.4" cy="147.6" r="1.9" fill="#fff" stroke="#222" stroke-width=".8"/>
<circle cx="145.7" cy="187.3" r="1.9" fill="#fff" stroke="#222" stroke-width=".8"/>
<circle cx="118.8" cy="192.5" r="1.9" fill="#fff" stroke="#222" stroke-width=".8"/>
<circle cx="105.0" cy="186.0" r="1.9" fill="#fff" stroke="#222" stroke-width=".8"/>
<circle cx="101.0" cy="194.5" r="1.9" fill="#fff" stroke="#222" stroke-width=".8"/>
<circle cx="91.2" cy="191.8" r="1.9" fill="#fff" stroke="#222" stroke-width=".8"/>
<circle cx="91.2" cy="204.8" r="1.9" fill="#fff" stroke="#222" stroke-width=".8"/>
<circle cx="199.6" cy="192.5" r="1.9" fill="#fff" stroke="#222" stroke-width=".8"/>
<circle cx="205.0" cy="177.2" r="1.9" fill="#fff" stroke="#222" stroke-width=".8"/>
<circle cx="205.0" cy="186.0" r="1.9" fill="#fff" stroke="#222" stroke-width=".8"/>
<circle cx="288.0" cy="118.8" r="1.9" fill="#fff" stroke="#222" stroke-width=".8"/>
<circle cx="288.0" cy="130.0" r="1.9" fill="#fff" stroke="#222" stroke-width=".8"/>
<circle cx="366.6" cy="121.0" r="1.9" fill="#fff" stroke="#222" stroke-width=".8"/>
<circle cx="379.0" cy="186.4" r="1.9" fill="#fff" stroke="#222" stroke-width=".8"/>
<circle cx="476.2" cy="186.4" r="1.9" fill="#fff" stroke="#222" stroke-width=".8"/>
<circle cx="534.0" cy="127.8" r="1.9" fill="#fff" stroke="#222" stroke-width=".8"/>
<circle cx="582.4" cy="177.2" r="1.9" fill="#fff" stroke="#222" stroke-width=".8"/>
<circle cx="582.4" cy="185.8" r="1.9" fill="#fff" stroke="#222" stroke-width=".8"/>
<circle cx="91.2" cy="210.8" r="1.9" fill="#9a9a9a" stroke="#222" stroke-width=".8"/>
<circle cx="661.2" cy="208.5" r="1.9" fill="#9a9a9a" stroke="#222" stroke-width=".8"/>
<path d="M14.7 302.4V281.5M12 286L14.7 281.3L17.4 286" stroke="#18d22c" stroke-width="1"/>
<path d="M14.7 302.4H36.6M32.4 299L36.8 302.4L32.4 306" stroke="#ff3232" stroke-width="1"/>
<text x="11.6" y="279.4" font-family="Liberation Sans,sans-serif" font-size="7" fill="#9edb1c">Y</text>
<text x="38" y="305.2" font-family="Liberation Sans,sans-serif" font-size="7.5" fill="#ff6038">X</text>
</svg>
<svg style="left:10px;top:317px" width="733" height="105" viewBox="10 317 733 105" fill="none">
<path d="M376 329.6L449.3 328V370.4H473.3V327C476.4 327.0 485.9 326.9 492.0 327.0C498.1 327.1 503.8 327.4 510.0 327.8C516.2 328.2 523.2 328.7 529.0 329.3C534.8 329.9 539.5 330.5 545.0 331.3C550.5 332.1 555.5 332.6 562.0 334.0C568.5 335.4 578.3 338.1 584.0 339.8C589.7 341.5 592.2 342.6 596.0 344.2C599.8 345.8 603.7 347.4 606.7 349.3C609.7 351.2 611.8 353.2 614.0 355.4C616.2 357.6 618.3 360.4 620.0 362.7C621.7 365.0 622.9 367.2 624.0 369.4C625.1 371.6 625.9 373.6 626.7 376.0C627.5 378.4 628.2 381.2 628.6 384.0C629.0 386.8 629.3 390.2 629.3 392.7C629.3 395.2 629.0 396.9 628.6 399.0C628.2 401.1 627.5 403.2 626.7 405.0C625.9 406.8 624.7 408.2 623.6 409.6C622.5 411.0 620.6 412.5 620.0 413.1C612.2 412.9 585.8 412.4 573.3 412.0C560.8 411.6 554.2 411.3 545.0 411.0C535.8 410.7 527.0 410.4 517.8 410.4C508.6 410.4 499.3 410.6 490.0 410.9C480.7 411.2 470.3 411.6 462.0 412.0C453.7 412.4 449.0 412.8 440.0 413.3C431.0 413.8 418.7 414.4 408.0 414.9C397.3 415.4 381.3 416.1 376.0 416.4C370.7 416.1 354.7 415.4 344.0 414.9C333.3 414.4 321.0 413.8 312.0 413.3C303.0 412.8 298.3 412.4 290.0 412.0C281.7 411.6 271.3 411.2 262.0 410.9C252.7 410.6 243.4 410.4 234.2 410.4C225.0 410.4 216.2 410.7 207.0 411.0C197.8 411.3 191.2 411.6 178.7 412.0C166.2 412.4 139.8 412.9 132.0 413.1C131.4 412.5 129.5 411.0 128.4 409.6C127.3 408.2 126.1 406.8 125.3 405.0C124.5 403.2 123.8 401.1 123.4 399.0C123.0 396.9 122.7 395.2 122.7 392.7C122.7 390.2 123.0 386.8 123.4 384.0C123.8 381.2 124.5 378.4 125.3 376.0C126.1 373.6 126.9 371.6 128.0 369.4C129.1 367.2 130.3 365.0 132.0 362.7C133.7 360.4 135.8 357.6 138.0 355.4C140.2 353.2 142.3 351.2 145.3 349.3C148.3 347.4 152.2 345.8 156.0 344.2C159.8 342.6 162.3 341.5 168.0 339.8C173.7 338.1 183.5 335.4 190.0 334.0C196.5 332.6 201.5 332.1 207.0 331.3C212.5 330.5 217.2 329.9 223.0 329.3C228.8 328.7 235.8 328.2 242.0 327.8C248.2 327.4 253.9 327.1 260.0 327.0C266.1 326.9 275.6 327.0 278.7 327.0V370.4H302.7V328.4Z" fill="#fff" stroke="#8f8f8f" stroke-width=".8"/>
<path d="M447.8 328V362" stroke="#8f8f8f" stroke-width=".8"/>
<path d="M305.4 328.6V362H446.8" stroke="#2f9a62" stroke-width="1.1"/>
<circle cx="376.0" cy="362.0" r="1.8" fill="#fff" stroke="#222" stroke-width=".8"/>
<circle cx="447.0" cy="362.0" r="1.8" fill="#fff" stroke="#222" stroke-width=".8"/>
<circle cx="376.0" cy="329.6" r=".8" fill="#777"/>
<circle cx="376.0" cy="416.4" r=".8" fill="#777"/>
<circle cx="492.0" cy="327.0" r=".8" fill="#777"/>
<circle cx="584.0" cy="339.8" r=".8" fill="#777"/>
<circle cx="629.3" cy="392.7" r=".8" fill="#777"/>
<circle cx="620.0" cy="413.1" r=".8" fill="#777"/>
<circle cx="449.3" cy="327.6" r=".8" fill="#777"/>
<circle cx="473.3" cy="327.0" r=".8" fill="#777"/>
<circle cx="449.3" cy="370.4" r=".8" fill="#777"/>
<circle cx="473.3" cy="370.4" r=".8" fill="#777"/>
<path d="M14.7 412.5V391M12 395.6L14.7 390.8L17.4 395.6" stroke="#2a2aff" stroke-width="1"/>
<path d="M14.7 412.5H36.6M32.4 409L36.8 412.5L32.4 416" stroke="#2ae83a" stroke-width="1"/>
<text x="11.8" y="389" font-family="Liberation Sans,sans-serif" font-size="7" fill="#3a3aff">Z</text>
<text x="38" y="415.2" font-family="Liberation Sans,sans-serif" font-size="7.5" fill="#9edb1c">Y</text>
</svg>
<svg style="left:10px;top:426px" width="733" height="92" viewBox="10 426 733 92" fill="none">
<path d="M43.4 490.4C43.6 489.7 44.0 487.4 44.6 486.0C45.2 484.6 46.1 483.3 47.0 482.0C47.9 480.7 48.8 479.3 50.0 478.0C51.2 476.7 52.7 475.1 54.0 474.0C55.3 472.9 56.7 472.0 58.0 471.2C59.3 470.4 60.7 469.6 62.0 469.0C63.3 468.4 64.7 467.8 66.0 467.3C67.3 466.8 67.7 466.6 70.0 466.0C72.3 465.4 74.6 464.6 79.6 464.0C84.6 463.4 91.6 462.9 100.0 462.4C108.4 461.9 118.3 461.4 130.0 461.0C141.7 460.6 155.2 460.1 170.0 459.8C184.8 459.5 199.8 459.5 219.0 459.4C238.2 459.3 263.2 459.4 285.0 459.4C306.8 459.4 327.5 459.4 350.0 459.3C372.5 459.2 396.3 459.4 420.0 459.1C443.7 458.9 475.5 458.2 492.2 457.8C508.9 457.4 509.9 457.3 520.0 457.0C530.1 456.7 540.0 456.8 553.0 456.1C566.0 455.5 587.1 453.9 597.8 453.1C608.5 452.3 608.0 451.9 617.2 451.1C626.5 450.3 643.6 448.9 653.3 448.1C663.0 447.3 668.0 446.6 675.6 446.1C683.2 445.6 694.0 445.3 698.9 445.3C703.8 445.3 703.3 445.4 705.0 445.9C706.7 446.4 708.2 447.9 708.9 448.3C708.4 449.0 707.5 451.2 705.6 452.4C703.8 453.6 700.9 454.3 697.8 455.6C694.6 456.9 690.4 458.6 686.7 460.0C683.0 461.4 679.3 462.8 675.6 464.1C671.9 465.4 670.0 466.2 664.4 467.8C658.8 469.4 650.1 472.1 642.2 473.9C634.3 475.7 624.4 477.2 617.0 478.4C609.6 479.6 604.7 480.3 597.8 481.2C590.9 482.1 583.0 483.1 575.6 484.0C568.2 484.9 562.6 485.8 553.3 486.9C544.0 488.0 529.2 489.9 520.0 490.9C510.8 491.9 507.1 492.1 497.8 492.8C488.5 493.5 477.4 494.3 464.4 495.0C451.4 495.7 433.2 496.7 420.0 497.2C406.8 497.7 396.7 497.6 385.0 497.8C373.3 498.0 360.8 498.1 350.0 498.3C339.2 498.5 330.8 498.7 320.0 498.8C309.2 498.9 300.4 499.1 285.4 499.2C270.4 499.3 247.6 499.4 230.0 499.4C212.4 499.4 196.7 499.4 180.0 499.4C163.3 499.4 148.3 499.3 130.0 499.3C111.7 499.3 84.4 499.4 70.0 499.4C55.6 499.4 47.8 499.4 43.4 499.4Z" fill="#fff" stroke="none"/>
<path d="M37 499.5H715.5" stroke="#4a4a4a" stroke-width=".8"/>
<path d="M46.6 483.2V499.1" stroke="#8a8a8a" stroke-width=".7" stroke-dasharray="1.4 1"/>
<path d="M69.4 466.7V499.1" stroke="#8a8a8a" stroke-width=".7" stroke-dasharray="1.4 1"/>
<path d="M125.0 461.7V499.0" stroke="#8a8a8a" stroke-width=".7" stroke-dasharray="1.4 1"/>
<path d="M227.4 459.9V499.1" stroke="#8a8a8a" stroke-width=".7" stroke-dasharray="1.4 1"/>
<path d="M427.3 459.5V496.5" stroke="#8a8a8a" stroke-width=".7" stroke-dasharray="1.4 1"/>
<path d="M597.4 453.6V481.0" stroke="#8a8a8a" stroke-width=".7" stroke-dasharray="1.4 1"/>
<rect x="118" y="495.4" width="155" height="3" fill="#d9d9d9" stroke="#8a8a8a" stroke-width=".6"/>
<path d="M118.4 498V496H120.4V498M236.6 495.6V498" stroke="#4a4ae0" stroke-width=".6"/>
<path d="M43.4 493H128V499.2" stroke="#8af0c4" stroke-width=".9"/>
<path d="M43.4 499.3C80 499 110 497.4 128 494.4" stroke="#8af0c4" stroke-width=".8"/>
<path d="M43.4 493.0C52.8 492.9 77.2 492.8 100.0 492.6C122.8 492.4 149.1 492.0 180.0 491.6C210.9 491.2 257.1 490.4 285.4 490.0C313.7 489.6 327.6 489.7 350.0 489.2C372.4 488.7 400.9 488.0 420.0 487.2C439.1 486.4 447.7 485.4 464.4 484.4C481.1 483.4 505.2 482.2 520.0 481.2C534.8 480.1 543.7 479.0 553.0 478.1C562.3 477.2 568.1 476.5 575.6 475.6C583.1 474.7 590.4 473.7 597.8 472.8C605.2 471.9 612.6 471.1 620.0 470.0C627.4 468.9 634.8 467.7 642.2 466.3C649.6 464.9 658.8 462.9 664.4 461.7C670.0 460.5 671.9 460.0 675.6 459.2C679.3 458.4 682.8 457.6 686.7 456.7C690.6 455.8 695.8 454.8 698.9 453.9C702.0 453.0 704.5 452.0 705.6 451.6" stroke="#3a9cf2" stroke-width=".9"/>
<path d="M75.4 476V499.2M170 476V499.2" stroke="#7fe6f2" stroke-width=".9"/>
<path d="M75.4 476H170" stroke="#2a9fa3" stroke-width="1"/>
<path d="M379.6 459.4V473.3M492.6 458V472.2" stroke="#9af0c6" stroke-width=".9"/>
<path d="M379.6 473.3L492.8 472.2" stroke="#2f9a62" stroke-width="1.1"/>
<path d="M43.4 490.4C43.6 489.7 44.0 487.4 44.6 486.0C45.2 484.6 46.1 483.3 47.0 482.0C47.9 480.7 48.8 479.3 50.0 478.0C51.2 476.7 52.7 475.1 54.0 474.0C55.3 472.9 56.7 472.0 58.0 471.2C59.3 470.4 60.7 469.6 62.0 469.0C63.3 468.4 64.7 467.8 66.0 467.3C67.3 466.8 67.7 466.6 70.0 466.0C72.3 465.4 74.6 464.6 79.6 464.0C84.6 463.4 91.6 462.9 100.0 462.4C108.4 461.9 118.3 461.4 130.0 461.0C141.7 460.6 155.2 460.1 170.0 459.8C184.8 459.5 199.8 459.5 219.0 459.4C238.2 459.3 263.2 459.4 285.0 459.4C306.8 459.4 327.5 459.4 350.0 459.3C372.5 459.2 396.3 459.4 420.0 459.1C443.7 458.9 475.5 458.2 492.2 457.8C508.9 457.4 509.9 457.3 520.0 457.0C530.1 456.7 540.0 456.8 553.0 456.1C566.0 455.5 587.1 453.9 597.8 453.1C608.5 452.3 608.0 451.9 617.2 451.1C626.5 450.3 643.6 448.9 653.3 448.1C663.0 447.3 668.0 446.6 675.6 446.1C683.2 445.6 694.0 445.3 698.9 445.3C703.8 445.3 703.3 445.4 705.0 445.9C706.7 446.4 708.2 447.9 708.9 448.3" stroke="#2a2a2a" stroke-width=".95"/>
<path d="M43.4 499.4C47.8 499.4 55.6 499.4 70.0 499.4C84.4 499.4 111.7 499.3 130.0 499.3C148.3 499.3 163.3 499.4 180.0 499.4C196.7 499.4 212.4 499.4 230.0 499.4C247.6 499.4 270.4 499.3 285.4 499.2C300.4 499.1 309.2 498.9 320.0 498.8C330.8 498.7 339.2 498.5 350.0 498.3C360.8 498.1 373.3 498.0 385.0 497.8C396.7 497.6 406.8 497.7 420.0 497.2C433.2 496.7 451.4 495.7 464.4 495.0C477.4 494.3 488.5 493.5 497.8 492.8C507.1 492.1 510.8 491.9 520.0 490.9C529.2 489.9 544.0 488.0 553.3 486.9C562.6 485.8 568.2 484.9 575.6 484.0C583.0 483.1 590.9 482.1 597.8 481.2C604.7 480.3 609.6 479.6 617.0 478.4C624.4 477.2 634.3 475.7 642.2 473.9C650.1 472.1 658.8 469.4 664.4 467.8C670.0 466.2 671.9 465.4 675.6 464.1C679.3 462.8 683.0 461.4 686.7 460.0C690.4 458.6 694.6 456.9 697.8 455.6C700.9 454.3 703.8 453.6 705.6 452.4C707.5 451.2 708.4 449.0 708.9 448.3" stroke="#2a2a2a" stroke-width=".95"/>
<path d="M43.4 490.4V499.4" stroke="#2a2a2a" stroke-width=".95"/>
<path d="M44.4 499.4H170" stroke="#4fc796" stroke-width="1"/>
<path d="M176.4 460C183.5 459.9 200.9 459.5 219.0 459.4C237.1 459.3 263.2 459.4 285.0 459.4C306.8 459.4 327.5 459.4 350.0 459.3C372.5 459.2 396.3 459.4 420.0 459.1C443.7 458.9 475.5 458.2 492.2 457.8C508.9 457.4 509.9 457.3 520.0 457.0C530.1 456.7 540.0 456.8 553.0 456.1C566.0 455.5 587.1 453.9 597.8 453.1C608.5 452.3 614.0 451.4 617.2 451.1" stroke="#34349c" stroke-width=".9"/>
<path d="M379.6 459.3L492.6 457.9" stroke="#2f8a6a" stroke-width="1"/>
<path d="M176.6 476L176.2 460.2M617.2 451.2V476" stroke="#7f7fee" stroke-width=".9"/>
<path d="M176 476.2H617" stroke="#3535f2" stroke-width="1.4"/>
<circle cx="43.4" cy="490.4" r="1.8" fill="#fff" stroke="#222" stroke-width=".8"/>
<circle cx="43.4" cy="493.4" r="1.8" fill="#fff" stroke="#222" stroke-width=".8"/>
<circle cx="43.4" cy="499.4" r="1.8" fill="#fff" stroke="#222" stroke-width=".8"/>
<circle cx="79.6" cy="464.0" r="1.8" fill="#fff" stroke="#222" stroke-width=".8"/>
<circle cx="75.4" cy="476.0" r="1.8" fill="#fff" stroke="#222" stroke-width=".8"/>
<circle cx="170.0" cy="476.0" r="1.8" fill="#fff" stroke="#222" stroke-width=".8"/>
<circle cx="176.0" cy="476.0" r="1.8" fill="#fff" stroke="#222" stroke-width=".8"/>
<circle cx="219.0" cy="459.4" r="1.8" fill="#fff" stroke="#222" stroke-width=".8"/>
<circle cx="285.4" cy="490.0" r="1.8" fill="#fff" stroke="#222" stroke-width=".8"/>
<circle cx="285.4" cy="499.2" r="1.8" fill="#fff" stroke="#222" stroke-width=".8"/>
<circle cx="379.6" cy="473.3" r="1.8" fill="#fff" stroke="#222" stroke-width=".8"/>
<circle cx="492.8" cy="472.2" r="1.8" fill="#fff" stroke="#222" stroke-width=".8"/>
<circle cx="553.0" cy="456.1" r="1.8" fill="#fff" stroke="#222" stroke-width=".8"/>
<circle cx="553.0" cy="478.1" r="1.8" fill="#fff" stroke="#222" stroke-width=".8"/>
<circle cx="616.9" cy="476.1" r="1.8" fill="#fff" stroke="#222" stroke-width=".8"/>
<circle cx="698.9" cy="445.3" r="1.8" fill="#fff" stroke="#222" stroke-width=".8"/>
<circle cx="698.9" cy="453.9" r="1.8" fill="#fff" stroke="#222" stroke-width=".8"/>
<circle cx="705.6" cy="451.4" r="1.8" fill="#fff" stroke="#222" stroke-width=".8"/>
<circle cx="706.1" cy="454.1" r="1.8" fill="#fff" stroke="#222" stroke-width=".8"/>
<circle cx="708.9" cy="448.3" r="1.8" fill="#fff" stroke="#222" stroke-width=".8"/>
<path d="M14.4 508.4V487M11.7 491.6L14.4 486.8L17.1 491.6" stroke="#2a2aff" stroke-width="1"/>
<path d="M14.4 508.4H36M31.8 505L36.2 508.4L31.8 512" stroke="#ff3a3a" stroke-width="1.2"/>
<text x="11.6" y="485.4" font-family="Liberation Sans,sans-serif" font-size="7" fill="#3a3aff">Z</text>
<text x="38" y="511.2" font-family="Liberation Sans,sans-serif" font-size="7.5" fill="#ff5038">X</text>
</svg>
<svg style="left:0;top:37px" width="900" height="75" viewBox="0 37 900 75">
<defs>
<radialGradient id="sph" cx="0.38" cy="0.28" r="0.8"><stop offset="0" stop-color="#5fd8ff"/><stop offset="0.35" stop-color="#1e8cff"/><stop offset="0.75" stop-color="#0b2cf5"/><stop offset="1" stop-color="#0a18c8"/></radialGradient>
<linearGradient id="dsk" x1="0" y1="0" x2="0" y2="1"><stop offset="0" stop-color="#e01010"/><stop offset="0.35" stop-color="#f07010"/><stop offset="0.65" stop-color="#f8c030"/><stop offset="1" stop-color="#fff8e0"/></linearGradient>
</defs>
<!-- board + hand -->
<path d="M12.7 39.8C9.5 43.5 7.9 47.5 8.1 52C8.3 56.5 10 60.5 12.7 60.6C15.6 60.5 17.7 56.5 17.8 52C17.9 47.5 15.8 43.5 12.7 39.8Z" fill="#fff" stroke="#8a8a8a" stroke-width=".8"/>
<path d="M11 47.5L12.3 44.6L13 47.3M13.6 47.3L14.6 45.2L15.3 48" stroke="#f08a8a" stroke-width=".9" fill="none"/>
<path d="M11.6 47.2C12.2 46.6 13 46.8 13 47.8V50.2L16.4 50.9C17.6 51.2 17.9 52 17.7 53.5L17 57.8H12.2L10.5 54.2C10.1 53.3 10.7 52.7 11.6 53.2Z" fill="#fff" stroke="#555" stroke-width=".8"/>
<!-- folder -->
<path d="M31.5 44.6L36 43.4L37 44.5L41.2 45.2L40 54.5L32.8 56.4Z" fill="#e9e39a" stroke="#9a9a86" stroke-width=".7"/>
<path d="M29 45.9L37.6 47.2L40.4 56.6L32.4 55.5Z" fill="#f6f18c" stroke="#a8a884" stroke-width=".7"/>
<path d="M40 54.6L41.8 56.8L40.4 56.7Z" fill="#777"/>
<!-- disk -->
<path d="M53.4 43.6L55 43L63 46.5V57L61.6 57L53.4 53.6Z" fill="#555" stroke="#444" stroke-width=".5"/>
<path d="M55 46.8L61.3 48.6V55L55 53Z" fill="url(#dsk)"/>
<path d="M56.3 44.2L60.5 45.8" stroke="#cfcfcf" stroke-width="1"/>
<path d="M62.2 55.6L64.4 57.6L62.2 57.8Z" fill="#333"/>
<!-- ruler -->
<rect x="85" y="43.8" width="13.4" height="7" fill="#fff"/>
<path d="M85 45.6H96.5M95.4 43.3V50.3" stroke="#b4b4b4" stroke-width=".9" fill="none"/>
<path d="M97 44L98.2 46.5V50" stroke="#cfcfcf" stroke-width=".6" fill="none"/>
<path d="M85 51.2Q86.2 50.2 87.4 51.2Q88.6 50.2 89.8 51.2Q91 50.2 92.2 51.2Q93.4 50.2 94.6 51.2Q95.8 50.2 97 51.2L98.3 50.8V56.8H85Z" fill="#f7c81a"/>
<path d="M85 56.9H98.4" stroke="#c59c10" stroke-width=".8"/>
<path d="M88.2 52.6V55.2M94 52.6Q93.2 55 94.4 55.2Q95.4 55 94.8 52.6" stroke="#b28a10" stroke-width=".8" fill="none"/>
<!-- design icon -->
<path d="M128.2 44.3L134 56" stroke="#333" stroke-width=".9"/>
<circle cx="128.2" cy="44.3" r="1.7" fill="#0a22e0"/>
<circle cx="131.3" cy="50.3" r="2.6" fill="#f00808"/>
<circle cx="134" cy="56" r="1.8" fill="#10d830"/>
<!-- 3D sphere -->
<circle cx="190.3" cy="50.2" r="6.2" fill="url(#sph)"/>
<!-- plan doc -->
<path d="M245.2 43.4H254.3L257 46V57H245.2Z" fill="#fff" stroke="#6c6c6c" stroke-width=".8"/>
<path d="M254.3 43.4L257 46H254.3Z" fill="#2a8fe6" stroke="#2a8fe6" stroke-width=".6"/>
<path d="M246.5 46H252.5M246.5 48.6H250M251.5 48.6Q254 49.4 251.5 51.4M246.5 51.5H252M247 54.4H250.5M251.6 53.2H254.4M255.2 47.5V55.6" stroke="#d9d0a8" stroke-width=".8" fill="none"/>
<path d="M253 54.6H254.8M248.6 55.6H250" stroke="#9c9c9c" stroke-width=".7"/>
<!-- cnc -->
<rect x="309.2" y="42.6" width="2.7" height="4.6" fill="#fff" stroke="#1c1c5e" stroke-width=".9"/>
<path d="M304.3 47.3H315.6C315.6 52.6 313.6 56.8 310 56.9C306.3 56.8 304.3 52.6 304.3 47.3Z" fill="#b9bad0" stroke="#1c1c5e" stroke-width=".9"/>
<path d="M306 49V53.4M307.6 49V55M309.2 49V55.8M310.8 49V55.8M312.4 49V55M314 49V53.4" stroke="#f4f4fa" stroke-width=".7"/>
<path d="M304.8 50.6H315.2M305.3 52.4H314.7M306 54.2H314" stroke="#5c5d84" stroke-width=".5"/>
</svg>
<svg style="left:0;top:86px" width="900" height="26" viewBox="0 86 900 26">
<!-- 1 arrow -->
<rect x="14.4" y="92" width="2.3" height="2.3" fill="#25343c"/>
<path d="M16.7 94.8V102.4L18.6 100.9L20.3 104.2L22 103.4L20.4 100.2L22.8 100Z" fill="#25343c"/>
<!-- 2 select box + arrow -->
<rect x="35.4" y="90.6" width="9.4" height="9" fill="#f7f8fb" stroke="#8c989e" stroke-width=".8"/>
<rect x="37.4" y="92.8" width="1.9" height="1.9" fill="#465a64"/><rect x="41" y="94.2" width="1.9" height="1.9" fill="#465a64"/>
<path d="M43.3 96.7V104.2L45.1 102.8L46.8 106L48.5 105.2L46.9 102.1L49.2 101.9Z" fill="#465a64"/>
<!-- 3 magnifier -->
<circle cx="63.3" cy="97.1" r="3.4" fill="none" stroke="#41555e" stroke-width="1.5"/>
<path d="M66 100.3L69.5 104.3" stroke="#41555e" stroke-width="2.3" stroke-linecap="round"/>
<!-- 4 zoom box -->
<rect x="79.2" y="90.8" width="8.7" height="6.6" fill="none" stroke="#8a9aa4" stroke-width=".9"/>
<circle cx="87.6" cy="98" r="3.3" fill="none" stroke="#41555e" stroke-width="1.4"/>
<path d="M90.3 101.2L94.1 105.6" stroke="#41555e" stroke-width="2.3" stroke-linecap="round"/>
<!-- 5 hand -->
<path d="M103 103.6C104.8 100.4 105.6 96.6 108.2 93.6C110.6 92.4 114.6 91.6 117.4 93.2C116.8 95.6 114.6 97.8 113.4 100.2C115 100.6 117 100.6 118.4 102.2C115 103 110.4 104.8 107.4 107" fill="none" stroke="#383838" stroke-width=".8"/>
<path d="M110 92.8L108.8 96M111.9 92.4L110.8 96.4M113.8 92.4L112.8 96.8M115.8 92.8L114.2 97" stroke="#383838" stroke-width=".8"/>
<!-- 6 copy (disabled) -->
<g fill="#fafafa" stroke="#d6d6d6" stroke-width=".9">
<path d="M138.2 91.4L145.2 90.4L147 102.4L140.4 104Z"/>
<path d="M131.6 94.6L141.2 92L144.6 104.4L135.2 107Z"/>
<circle cx="138.2" cy="99.6" r="2.6"/>
<!-- 7 paste (disabled) -->
<path d="M154.4 94.4L164.8 90.8L170.6 103.4L158.6 107.8Z"/>
<path d="M158.6 92.6L159.4 90.6L163 89.8L164 91.2"/>
<circle cx="162.4" cy="98.4" r="2.8"/>
</g>
<!-- undo/redo disabled -->
<path d="M184.2 98L188.4 94V96.4H192C195 96.4 196.6 98 196.6 100.4V104H194V100.8C194 99.6 193.2 99.2 192 99.2H188.4V101.8Z" fill="#d9d9d9"/>
<path d="M220 98L215.8 94V96.4H212.2C209.2 96.4 207.6 98 207.6 100.4V104H210.2V100.8C210.2 99.6 211 99.2 212.2 99.2H215.8V101.8Z" fill="#d9d9d9"/>
<!-- outline -->
<path d="M232.6 98.8C233 96.2 237.6 94.8 241.8 94.8C246.4 94.8 250.6 96.8 252.2 98.8C250.6 100.8 246.4 102.8 241.8 102.8C237.6 102.8 233 101.4 232.6 98.8Z" fill="#2a363b"/>
<!-- rocker -->
<path d="M255.8 97.2C260 98 268.6 98.8 275 95.6C272.4 99.6 268.2 100.9 264.6 100.9C261 100.9 257.8 99.6 255.8 97.2Z" fill="#4a5c64"/>
<!-- thickness -->
<path d="M278.3 100C281.6 97.6 284.6 96.3 287.6 96.3C291 96.3 294.4 97.8 297 100Z" fill="#4a5c64"/>
<path d="M278.3 100H297" stroke="#4a5c64" stroke-width=".6"/>
<path d="M287.7 91.6L289.3 93.3L287.7 95L286.1 93.3ZM287.7 100.8L289.3 102.5L287.7 104.2L286.1 102.5Z" fill="#f0141e"/>
<!-- slice -->
<path d="M302.2 98.6C302.6 96.4 306.6 93.8 310.4 93.8C313.6 93.8 317.4 96 318.8 98.2C318.4 100 317 101.2 315.6 101.2H305C303.2 101.2 302 100.2 302.2 98.6Z" fill="#4f646c"/>
<!-- wireframe -->
<ellipse cx="333.4" cy="98.5" rx="9.8" ry="4.2" fill="#f4f4f4" stroke="#a6a6a6" stroke-width=".7"/>
<path d="M324.4 97H342.4M323.8 98.6H343M324.6 100.2H342.2M326.6 95.6H340.2M327 101.5H339.8" stroke="#a0a0a0" stroke-width=".5"/>
<path d="M328.4 95V102M333.4 94.4V102.7M339.2 95.2V101.8" stroke="#ee3030" stroke-width=".9" stroke-dasharray="1.6 .7"/>
<path d="M323.8 98.5H325M342 98.5H343.2" stroke="#ee6060" stroke-width=".8"/>
<!-- grid -->
<path d="M384.8 93.2H396.4V104.2H384.8ZM388.7 93.2V104.2M392.5 93.2V104.2M384.8 96.9H396.4M384.8 100.5H396.4" fill="#fff" stroke="#5f6f77" stroke-width="1"/>
<!-- ruler/board -->
<rect x="406.2" y="92.2" width="14.6" height="4" fill="#eef0f3" stroke="#5f6f77" stroke-width=".9"/>
<path d="M408.2 93.4V95.2M409.8 93.4V95.2M411.4 93.4V95.2M413 93.4V95.2M418 93.4V95.2" stroke="#9aa6ac" stroke-width=".8"/>
<path d="M416 92.2V96.2" stroke="#5f6f77" stroke-width="1.2"/>
<path d="M406.2 98.3H420.8" stroke="#5f6f77" stroke-width=".9"/>
<path d="M406.4 100.2H420.6C420.8 102.6 417.6 104.5 413.5 104.5C409.4 104.5 406.2 102.6 406.4 100.2Z" fill="#f4f5f8" stroke="#5f6f77" stroke-width=".9"/>
<path d="M408 100.8C409.6 100.2 417.4 100.2 419 100.8" stroke="#9aa6ac" stroke-width=".6" fill="none"/>
<!-- tangent -->
<path d="M435.7 92.4V106M430.8 99.6H441.8" stroke="#a9b8c0" stroke-width=".7" stroke-dasharray="1.6 1"/>
<path d="M430.4 104.8L442.6 92.8" stroke="#46565e" stroke-width="1.3"/>
<path d="M429.2 94.6L430.8 96.2M430.8 94.6L429.2 96.2M438.5 103.8L440.1 105.4M440.1 103.8L438.5 105.4" stroke="#9aa6ac" stroke-width=".6"/>
<!-- faint crosshair -->
<path d="M458.4 90V108.4M451 99.6H465.6" stroke="#dedede" stroke-width=".8"/>
<path d="M456 94H461.5M454 105H461" stroke="#e4e4e4" stroke-width=".8" stroke-dasharray="1.2 .8"/>
<!-- board side -->
<path d="M470.3 98.4C474 97 485 96.6 491.6 97.2L493.4 98.2C489 100 481 100.6 478 100.3C475 100 472 99.4 470.3 98.4Z" fill="#2a363b"/>
<path d="M491 96.4L492.8 97.6M491.6 100.2H493.8" stroke="#2a363b" stroke-width=".8"/>
<circle cx="491.6" cy="97.6" r=".7" fill="#fff"/>
<!-- fin -->
<path d="M502.2 92.8C503.2 91.8 506 91.6 508.6 92.6C513.6 94.6 517.6 99.6 519.8 105.2L519.6 106H517.8V107H516.2V106H511.4V107H509.8V106H507.4C507.8 101.6 506 96.8 502.2 92.8Z" fill="#2b3a50"/>
<!-- S|S -->
<path d="M539.5 90V108" stroke="#444" stroke-width=".7" stroke-dasharray="2.4 .8"/>
<path d="M535.4 92.8C533.6 94 532.4 95.4 532.6 96.6C533 98.2 535.6 98.8 535.8 100.6C535.9 102.2 534 103.6 532.2 104.6" fill="none" stroke="#222" stroke-width="1.1" stroke-dasharray="2 .9"/>
<path d="M547 92.4C544.6 93.6 542 95.4 542 97C542.2 99 546.8 100 546.9 102C547 103.4 544 104.4 541.8 105.2" fill="none" stroke="#1c1c1c" stroke-width="1.3"/>
<!-- colours -->
<rect x="561.7" y="92.7" width="5.2" height="5" fill="#fa0a14"/><rect x="568.3" y="92.7" width="5.3" height="5" fill="#ffd20a"/>
<rect x="561.7" y="99.2" width="5.2" height="4.9" fill="#96cc32"/><rect x="568.3" y="99.2" width="5.3" height="4.9" fill="#5ecfd0"/>
<!-- window -->
<rect x="585" y="93.4" width="11.4" height="10.6" fill="#fff" stroke="#2a363b" stroke-width="1"/>
<rect x="584.6" y="93" width="12.2" height="2.6" fill="#2a363b"/>
<path d="M587.4 99.2H594.6M587.4 102.3H594.6" stroke="#39464c" stroke-width=".9"/>
<path d="M589.6 96.2H592.4L591 97.4Z" fill="#39464c"/>
<path d="M585 104.3H596.6" stroke="#8aa0e8" stroke-width=".6"/>
<!-- move cross -->
<rect x="680.4" y="94" width="9.2" height="9.4" fill="#fafbfd" stroke="#e3e6ea" stroke-width=".5"/>
<path d="M685 95V102.6M681.2 98.8H688.8" stroke="#555" stroke-width=".8"/>
<path d="M685 94.4L686.2 95.9H683.8ZM685 103.2L686.2 101.7H683.8ZM680.7 98.8L682.2 97.6V100ZM689.3 98.8L687.8 97.6V100Z" fill="#555"/>
</svg>
<svg style="left:8px;top:68px" width="16" height="16" viewBox="8 68 16 16">
<path d="M11.6 71.6L19.4 81.4" stroke="#333" stroke-width=".8"/>
<circle cx="11.6" cy="71.6" r="1.4" fill="#0a22e0"/><circle cx="15.2" cy="76.4" r="2.1" fill="#f00808"/><circle cx="19.3" cy="81.2" r="1.4" fill="#10d830"/>
</svg>
<svg style="left:6px;top:4px" width="14" height="14" viewBox="6 4 14 14">
<defs><linearGradient id="wv" x1="0" y1="0" x2="0" y2="1"><stop offset="0" stop-color="#bcbcbc"/><stop offset="1" stop-color="#d9d9d9"/></linearGradient></defs>
<circle cx="12.4" cy="10.7" r="5.5" fill="#fafafa" stroke="#e4e4e4" stroke-width=".8"/>
<path d="M7.2 11C7 7.8 9.6 6.4 12.4 6.6C14.6 6.8 16.2 7.8 16.6 9.2C15.6 8.4 14.4 8.4 13.6 9.2C12.6 10.2 13.2 12.4 14.4 14.4C13.4 15.8 11.4 16 9.8 15.2C8.2 14.4 7.3 12.8 7.2 11Z" fill="url(#wv)"/>
</svg>

</body>
</html>
